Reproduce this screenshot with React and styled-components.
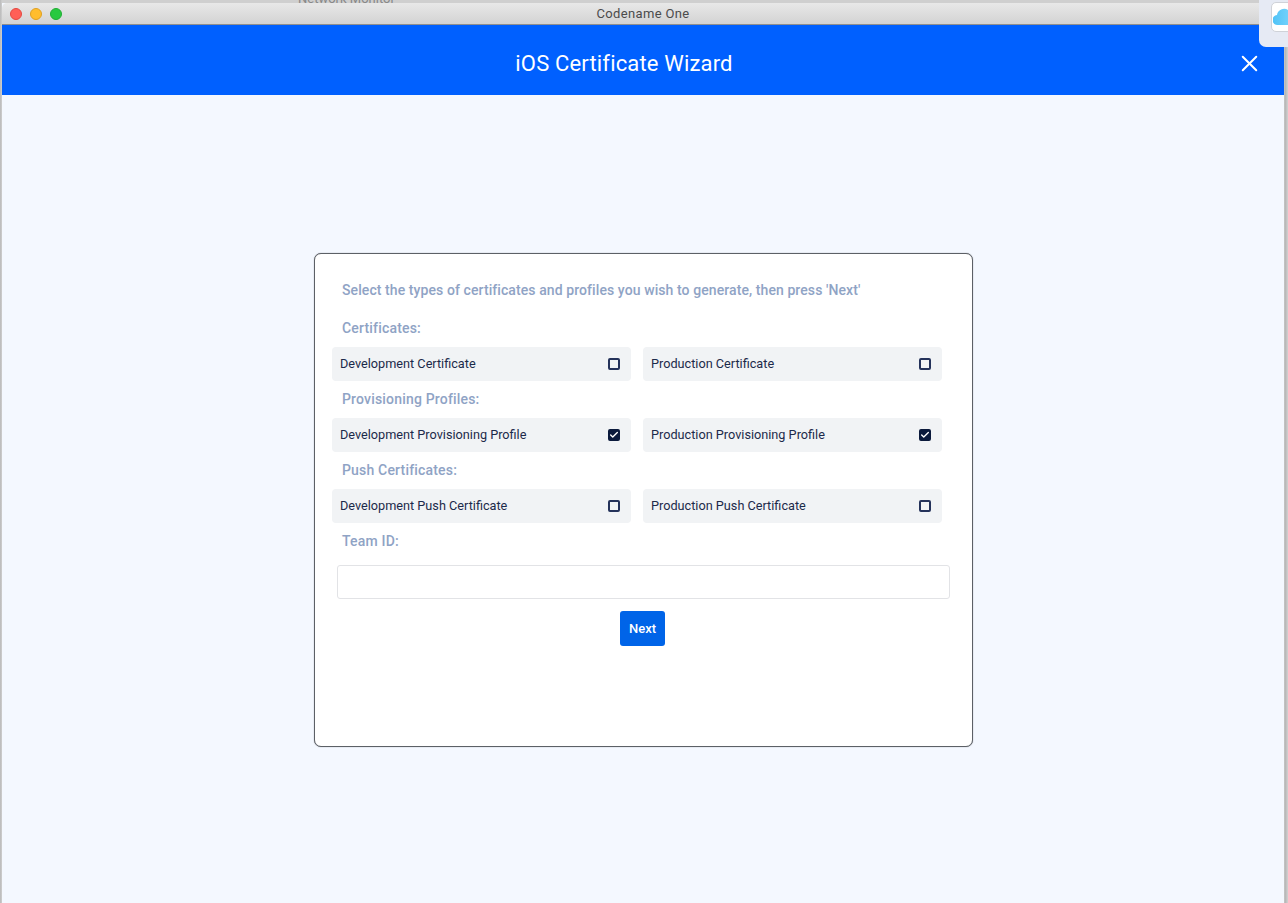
import React from 'react'
import styled, { createGlobalStyle } from 'styled-components'
import { X, Check } from 'lucide-react'

const Global = createGlobalStyle`
  html, body { margin: 0; padding: 0; height: 100%; }
  body { font-family: Roboto, "Liberation Sans", sans-serif; background: #cfcfcf; overflow: hidden; }
`

const Desktop = styled.div`
  position: relative;
  width: 1288px;
  height: 903px;
  padding: 3px 4px 0 2px;
  box-sizing: border-box;
  overflow: hidden;
  background: linear-gradient(90deg, #b9b9b9 0, #cfcfcf 2px, #cfcfcf 1284px, #b4b4b4 1285px, #d2d2d2 1288px);
`

const BehindText = styled.span`
  position: absolute;
  top: -9px;
  left: 298px;
  font-size: 13px;
  color: #888;
`

const Window = styled.div`
  position: relative;
  display: flex;
  flex-direction: column;
  height: 900px;
  background: #f4f8ff;
`

const TitleBar = styled.div`
  position: relative;
  flex: none;
  height: 22px;
  box-sizing: border-box;
  display: flex;
  align-items: center;
  justify-content: center;
  border-bottom: 1px solid #8f8f8f;
  border-radius: 5px 5px 0 0;
  background: linear-gradient(#e8e8e8, #d3d3d3);
  font-size: 13px;
  color: #4b4b4b;
  letter-spacing: 0.35px;
`

const Lights = styled.div`
  position: absolute;
  left: 8px;
  top: 5px;
  display: flex;
  gap: 8px;
`

const Light = styled.span`
  width: 12px;
  height: 12px;
  border-radius: 50%;
  box-sizing: border-box;
  background: ${p => p.$color};
  border: 1px solid ${p => p.$edge};
`

const Header = styled.header`
  position: relative;
  flex: none;
  height: 70px;
  box-sizing: border-box;
  padding: 6px 38px 0 0;
  display: flex;
  align-items: center;
  justify-content: center;
  background: #0060ff;
  color: #fff;
  font-size: 22px;
  font-weight: 400;
  letter-spacing: 0.16px;
`

const CloseButton = styled.div`
  position: absolute;
  right: 21px;
  top: 25px;
  width: 27px;
  height: 27px;
  display: flex;
  color: #fff;
`

const Body = styled.main`
  flex: 1;
  display: flex;
  align-items: flex-start;
  justify-content: center;
  padding-top: 158px;
`

const Card = styled.section`
  width: 659px;
  height: 494px;
  box-sizing: border-box;
  padding: 25px 30px 0 17px;
  display: flex;
  flex-direction: column;
  background: #fff;
  border: 1px solid #5c6066;
  border-radius: 7px;
  box-shadow: 0 0 1px rgba(40, 44, 50, 0.6);
`

const Intro = styled.h2`
  margin: 0 0 9px 10.5px;
  height: 22px;
  line-height: 22px;
  font-size: 14px;
  font-weight: 500;
  letter-spacing: 0.085px;
  color: #8fa3c5;
  white-space: nowrap;
`

const SectionLabel = styled.h3`
  margin: 0 0 0 10.5px;
  height: 37px;
  line-height: 37px;
  font-size: 14px;
  font-weight: 500;
  letter-spacing: 0.18px;
  color: #8fa3c5;
`

const Grid = styled.div`
  display: grid;
  grid-template-columns: 299px 299px;
  gap: 12px;
`

const Row = styled.label`
  height: 34px;
  box-sizing: border-box;
  padding: 0 11px 0 8.5px;
  display: flex;
  align-items: center;
  justify-content: space-between;
  background: #f1f3f5;
  border-radius: 4px;
  font-size: 12.7px;
  color: #1c2a4a;
`

const RowText = styled.span`
  padding-bottom: 2px;
`

const Box = styled.span`
  width: 12px;
  height: 12px;
  box-sizing: border-box;
  display: flex;
  align-items: center;
  justify-content: center;
  border: 2px solid ${p => (p.$on ? '#0b1a3c' : '#24325a')};
  border-radius: 2px;
  background: ${p => (p.$on ? '#0b1a3c' : 'transparent')};
  color: #fff;

  svg {
    flex: none;
  }
`

const TeamInput = styled.input`
  display: block;
  width: 613px;
  height: 34px;
  box-sizing: border-box;
  margin: 5px 0 0 5px;
  border: 1px solid #e2e3e6;
  border-radius: 3px;
  background: #fff;
  outline: none;
`

const NextButton = styled.button`
  align-self: center;
  margin: 12px 0 0 0;
  position: relative;
  left: 6px;
  width: 45px;
  height: 35px;
  padding: 0;
  border: 0;
  border-radius: 3px;
  background: #0064e8;
  color: #fff;
  font-family: inherit;
  font-size: 13px;
  font-weight: 500;
`

const NotificationTab = styled.div`
  position: absolute;
  top: -8px;
  right: 0;
  width: 29px;
  height: 55px;
  box-sizing: border-box;
  padding: 10px 0 0 12px;
  background: #e6eaf4;
  border-radius: 0 0 0 7px;
  overflow: hidden;
`

const TabIcon = styled.div`
  width: 30px;
  height: 30px;
  box-sizing: border-box;
  padding: 5px 0 0 1px;
  border-radius: 5px;
  background: #fff;
  border: 1px solid #cfd2d8;
`

const Cloud = () => (
  <svg width="30" height="18" viewBox="0 0 30 18">
    <defs>
      <linearGradient id="cloudFill" x1="0" y1="0" x2="1" y2="0">
        <stop offset="0" stopColor="#4fc3f7" />
        <stop offset="1" stopColor="#8fdcff" />
      </linearGradient>
    </defs>
    <path d="M5 17a5 5 0 0 1-1-10 7 7 0 0 1 12-4 6 6 0 0 1 8 4 5 5 0 0 1 1 10z" fill="url(#cloudFill)" />
  </svg>
)

const sections = [
  { label: 'Certificates:', left: 'Development Certificate', right: 'Production Certificate', on: false },
  { label: 'Provisioning Profiles:', left: 'Development Provisioning Profile', right: 'Production Provisioning Profile', on: true },
  { label: 'Push Certificates:', left: 'Development Push Certificate', right: 'Production Push Certificate', on: false },
]

const Option = ({ text, on }) => (
  <Row>
    <RowText>{text}</RowText>
    <Box $on={on}>{on && <Check size={10} strokeWidth={3.2} />}</Box>
  </Row>
)

export default function App() {
  return (
    <Desktop>
      <Global />
      <BehindText>Network Monitor</BehindText>
      <Window>
        <TitleBar>
          <Lights>
            <Light $color="#ff5f57" $edge="#e5483f" />
            <Light $color="#ffbd2e" $edge="#e0a020" />
            <Light $color="#28c940" $edge="#1fae33" />
          </Lights>
          Codename One
        </TitleBar>
        <Header>
          iOS Certificate Wizard
          <CloseButton><X size={27} strokeWidth={1.8} /></CloseButton>
        </Header>
        <Body>
          <Card>
            <Intro>Select the types of certificates and profiles you wish to generate, then press 'Next'</Intro>
            {sections.map(s => (
              <React.Fragment key={s.label}>
                <SectionLabel>{s.label}</SectionLabel>
                <Grid>
                  <Option text={s.left} on={s.on} />
                  <Option text={s.right} on={s.on} />
                </Grid>
              </React.Fragment>
            ))}
            <SectionLabel>Team ID:</SectionLabel>
            <TeamInput />
            <NextButton>Next</NextButton>
          </Card>
        </Body>
      </Window>
      <NotificationTab>
        <TabIcon><Cloud /></TabIcon>
      </NotificationTab>
    </Desktop>
  )
}
